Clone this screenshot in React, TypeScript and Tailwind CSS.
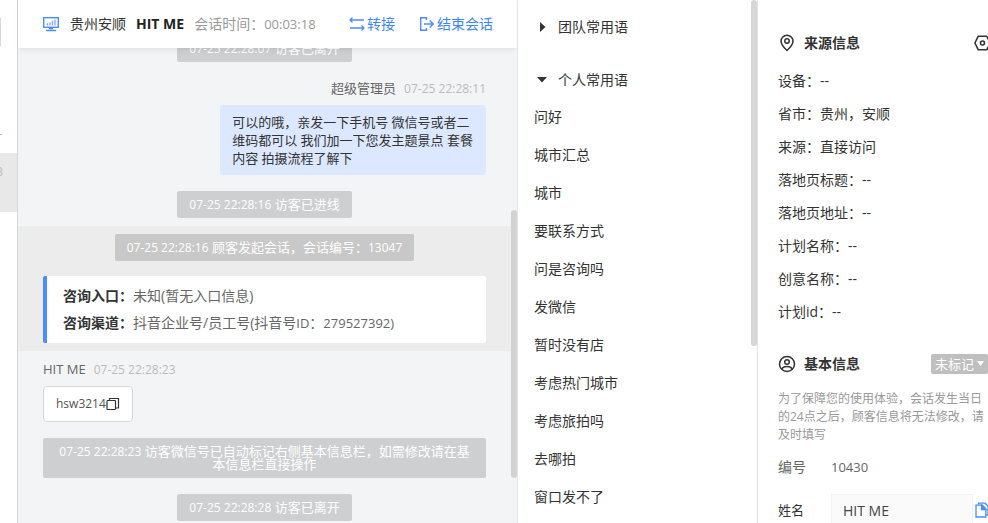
import type { ReactNode } from "react";

const PHRASES = [
  "问好",
  "城市汇总",
  "城市",
  "要联系方式",
  "问是咨询吗",
  "发微信",
  "暂时没有店",
  "考虑热门城市",
  "考虑旅拍吗",
  "去哪拍",
  "窗口发不了",
];

const SOURCE_INFO = [
  { label: "设备", value: "--" },
  { label: "省市", value: "贵州，安顺" },
  { label: "来源", value: "直接访问" },
  { label: "落地页标题", value: "--" },
  { label: "落地页地址", value: "--" },
  { label: "计划名称", value: "--" },
  { label: "创意名称", value: "--" },
  { label: "计划id", value: "--" },
];

function MonitorIcon() {
  return (
    <svg width="18" height="16" viewBox="0 0 18 16" fill="none" stroke="#4a8df8" aria-hidden="true">
      <rect x="1.7" y="1.7" width="14.6" height="9.6" strokeWidth="1.4" />
      <path d="M5.5 9.5V7.3M8 9.5V6.2M10.5 9.5V4.8M13 9.5V3.5" strokeWidth="1.3" opacity="0.75" />
      <path d="M7 12.5h4M4 14.5h10" strokeWidth="1.6" />
    </svg>
  );
}

function TransferIcon() {
  return (
    <svg width="16" height="14" viewBox="0 0 16 14" fill="none" stroke="#4a8df8" strokeWidth="1.3" aria-hidden="true">
      <path d="M3.5 0.5L1 3l2.5 2.5M1 3h14" />
      <path d="M12.5 8.5L15 11l-2.500 2.500M15 11H1" />
    </svg>
  );
}

function ExitIcon() {
  return (
    <svg width="16" height="16" viewBox="0 0 16 16" fill="none" stroke="#4a8df8" strokeWidth="1.4" aria-hidden="true">
      <path d="M7.5 4V1.7H1.7v12.6h5.8V12" />
      <path d="M5 8h9M10.8 4.6L14.2 8l-3.4 3.4" />
    </svg>
  );
}

function CopyIcon() {
  return (
    <svg width="14" height="14" viewBox="0 0 14 14" fill="none" stroke="#333" strokeWidth="1.2" aria-hidden="true">
      <rect x="1" y="3.5" width="8.5" height="9" rx="0.8" />
      <path d="M3.5 3.3V1.5h9V11H9.7" />
    </svg>
  );
}

function PinIcon() {
  return (
    <svg width="18" height="18" viewBox="0 0 18 18" fill="none" stroke="#333" strokeWidth="1.5" aria-hidden="true">
      <path d="M9 16.5C5.5 13.3 3 10.4 3 7.3a6 6 0 0 1 12 0c0 3.1-2.5 6-6 9.2z" />
      <circle cx="9" cy="7" r="2.2" />
    </svg>
  );
}

function HexIcon() {
  return (
    <svg width="18" height="16" viewBox="0 0 18 16" fill="none" stroke="#333" strokeWidth="1.6" strokeLinejoin="round" aria-hidden="true">
      <path d="M4.3 1.2h8.4L16.3 8l-3.6 6.8H4.3L0.9 8z" />
      <circle cx="8.5" cy="8" r="2" />
    </svg>
  );
}

function UserIcon() {
  return (
    <svg width="18" height="18" viewBox="0 0 18 18" fill="none" stroke="#333" strokeWidth="1.5" aria-hidden="true">
      <circle cx="9" cy="9" r="7.5" />
      <circle cx="9" cy="7" r="2.3" />
      <path d="M3.8 14.2c.8-1.9 2.300-2.700 5.200-2.700s4.400.8 5.200 2.700" />
    </svg>
  );
}

function DocsIcon() {
  return (
    <svg width="14" height="16" viewBox="0 0 14 16" fill="none" stroke="#4a8df8" strokeWidth="1.3" aria-hidden="true">
      <path d="M3.5 2.8V1.2H10l3 3V13h-1.8" />
      <path d="M1 3.2h6.5l3.3 3.5V15H1z" />
      <path d="M6.5 3.2v4.5h4.3z" fill="#4a8df8" />
    </svg>
  );
}

function Notice({ time, children }: { time: string; children: ReactNode }) {
  return (
    <div className="flex justify-center">
      <div className="rounded-xs bg-black/15 px-3 py-[7px] text-center text-[13px] leading-[13px] text-white">
        <span className="text-xs leading-[13px]">{time}</span> {children}
      </div>
    </div>
  );
}

function VisitorRail() {
  return (
    <aside className="w-[18px] shrink-0 overflow-hidden border-r border-[#d5d7d9] bg-white">
      <div className="h-[153px] pt-[18px]">
        <div className="h-7 w-px bg-[#d8d8d8]" />
        <div className="mt-[88px] h-px w-0.5 bg-[#f5a0a0]" />
      </div>
      <div className="h-[59px] bg-[#e8e8e8] pt-[10px]">
        <div className="flex w-[3px] justify-end text-xs leading-[18px] text-[#bbb]">
          <span>3</span>
        </div>
      </div>
    </aside>
  );
}

function ChatPanel() {
  return (
    <main className="flex min-w-0 flex-1 flex-col border-r border-[#e6e6e6] bg-[#f3f4f6]">
      <header className="relative z-10 flex h-12 shrink-0 items-center bg-white px-6 text-sm whitespace-nowrap shadow-md shadow-black/5">
        <MonitorIcon />
        <span className="ml-[10px] text-[#333]">贵州安顺</span>
        <strong className="ml-[10px] font-bold text-[#222]">HIT ME</strong>
        <span className="ml-[10px] text-[#999]">
          会话时间：<span className="text-[13px]">00:03:18</span>
        </span>
        <div className="ml-auto flex gap-6 text-[#3a86ff]">
          <button type="button" className="flex items-center gap-0.5">
            <TransferIcon />
            转接
          </button>
          <button type="button" className="flex items-center gap-0.5">
            <ExitIcon />
            结束会话
          </button>
        </div>
      </header>

      <div className="flex min-h-0 flex-1">
        <div className="min-w-0 flex-1 overflow-hidden">
          {/* Oldest notice is scrolled partly under the header */}
          <div className="-mt-[13px] px-[25px]">
            <Notice time="07-25 22:28:07">访客已离开</Notice>
            <div className="mt-4 flex flex-col items-end">
              <div className="flex h-[22px] items-center gap-2 text-[13px] text-[#666]">
                超级管理员
                <time className="text-xs text-[#bbb]">07-25 22:28:11</time>
              </div>
              <p className="mt-[5px] max-w-[60%] rounded-sm bg-[#dce8ff] px-3 py-2 text-[13px] leading-[18px] text-[#333]">
                可以的哦，亲发一下手机号 微信号或者二维码都可以 我们加一下您发主题景点 套餐内容 拍摄流程了解下
              </p>
            </div>
            <div className="mt-4">
              <Notice time="07-25 22:28:16">访客已进线</Notice>
            </div>
          </div>

          <section className="mt-2 bg-[#ececec] px-[25px] py-2">
            <Notice time="07-25 22:28:16">
              顾客发起会话，会话编号：<span className="text-xs leading-[13px]">13047</span>
            </Notice>
            <dl className="mt-[15px] rounded-xs border-l-4 border-[#4a8dff] bg-white pt-[6px] pb-[7px] pl-4 text-sm leading-[27px] text-[#666]">
              <div className="flex h-[27px]">
                <dt className="font-bold text-[#333]">咨询入口：</dt>
                <dd>未知(暂无入口信息)</dd>
              </div>
              <div className="flex h-[27px]">
                <dt className="font-bold text-[#333]">咨询渠道：</dt>
                <dd>
                  抖音企业号/员工号(抖音号<span className="text-[13px]">ID</span>：<span className="text-[13px]">279527392)</span>
                </dd>
              </div>
            </dl>
          </section>

          <div className="px-[25px] pt-2">
            <div className="flex h-[22px] items-center gap-2 text-[13px] text-[#666]">
              HIT ME
              <time className="text-xs text-[#bbb]">07-25 22:28:23</time>
            </div>
            <div className="mt-[5px] flex">
              <button type="button" className="flex h-9 items-center rounded-sm border border-[#d8d8d8] bg-white px-3 text-xs text-[#555]">
                hsw3214
                <CopyIcon />
              </button>
            </div>
            <div className="mt-4">
              <Notice time="07-25 22:28:23">访客微信号已自动标记右侧基本信息栏，如需修改请在基本信息栏直接操作</Notice>
            </div>
            <div className="mt-4">
              <Notice time="07-25 22:28:28">访客已离开</Notice>
            </div>
          </div>
        </div>
        <div className="w-1.5 shrink-0 pt-[162px]">
          <div className="h-[268px] rounded-full bg-[#d2d2d2]" />
        </div>
      </div>
    </main>
  );
}

function PhrasePanel() {
  return (
    <nav className="flex w-[240px] shrink-0 border-r border-[#e2e2e2] bg-white">
      <div className="min-w-0 flex-1 pt-[9px] pl-4 text-sm text-[#333]">
        <button type="button" className="flex h-9 items-center">
          <span className="flex w-6 pl-[6px]">
            <svg width="6" height="10" viewBox="0 0 6 10" aria-hidden="true">
              <path d="M0 0l5.5 5L0 10z" fill="#333" />
            </svg>
          </span>
          团队常用语
        </button>
        <button type="button" className="mt-[17px] flex h-9 items-center">
          <span className="flex w-6 pl-[3px]">
            <svg width="10" height="6" viewBox="0 0 10 6" aria-hidden="true">
              <path d="M0 0h10L5 5.500z" fill="#333" />
            </svg>
          </span>
          个人常用语
        </button>
        <ul>
          {PHRASES.map((phrase) => (
            <li key={phrase} className="h-[38px] leading-[38px]">
              {phrase}
            </li>
          ))}
        </ul>
      </div>
      <div className="w-1.5 shrink-0">
        <div className="h-[346px] rounded-full bg-[#d6d6d6]" />
      </div>
    </nav>
  );
}

function InfoPanel() {
  return (
    <aside className="w-[230px] shrink-0 overflow-hidden bg-white pl-5 text-sm text-[#333]">
      <div className="flex items-center pt-8 leading-[22px]">
        <PinIcon />
        <h2 className="ml-2 font-bold">来源信息</h2>
        <button type="button" aria-label="设置" className="-mr-1 ml-auto">
          <HexIcon />
        </button>
      </div>
      <dl className="mt-[10px] leading-[33px]">
        {SOURCE_INFO.map((row) => (
          <div key={row.label} className="flex">
            <dt>{row.label}：</dt>
            <dd>{row.value}</dd>
          </div>
        ))}
      </dl>

      <div className="mt-[25px] flex items-center leading-[22px]">
        <UserIcon />
        <h2 className="ml-2 font-bold">基本信息</h2>
        <div className="relative ml-auto">
          <select aria-label="标记" className="h-5 w-[57px] appearance-none rounded-xs bg-[#bfbfbf] pl-1 text-[13px] leading-5 text-white">
            <option>未标记</option>
          </select>
          <svg width="7" height="5" viewBox="0 0 7 5" className="pointer-events-none absolute top-2 right-1" aria-hidden="true">
            <path d="M0 0h7L3.5 5z" fill="#fff" />
          </svg>
        </div>
      </div>
      <p className="mt-[15px] pr-[3px] text-xs leading-[18px] text-[#999]">
        为了保障您的使用体验，会话发生当日的24点之后，顾客信息将无法修改，请及时填写
      </p>
      <div className="mt-3 flex leading-[22px] text-[#666]">
        <span className="w-[53px]">编号</span>
        <span className="text-[13px]">10430</span>
      </div>
      <div className="mt-4 flex h-8 items-center">
        <label htmlFor="visitor-name" className="w-[53px] shrink-0 text-[13px]">
          姓名
        </label>
        <input id="visitor-name" defaultValue="HIT ME" className="h-8 w-[142px] shrink-0 border border-[#f2f2f2] bg-[#fafafa] px-[11px] text-sm text-[#444]" />
        <button type="button" aria-label="复制" className="ml-0.5 shrink-0">
          <DocsIcon />
        </button>
      </div>
    </aside>
  );
}

export default function App() {
  return (
    <div className="flex h-screen overflow-hidden bg-white font-['Open_Sans','Noto_Sans_CJK_SC',sans-serif]">
      <VisitorRail />
      <ChatPanel />
      <PhrasePanel />
      <InfoPanel />
    </div>
  );
}
